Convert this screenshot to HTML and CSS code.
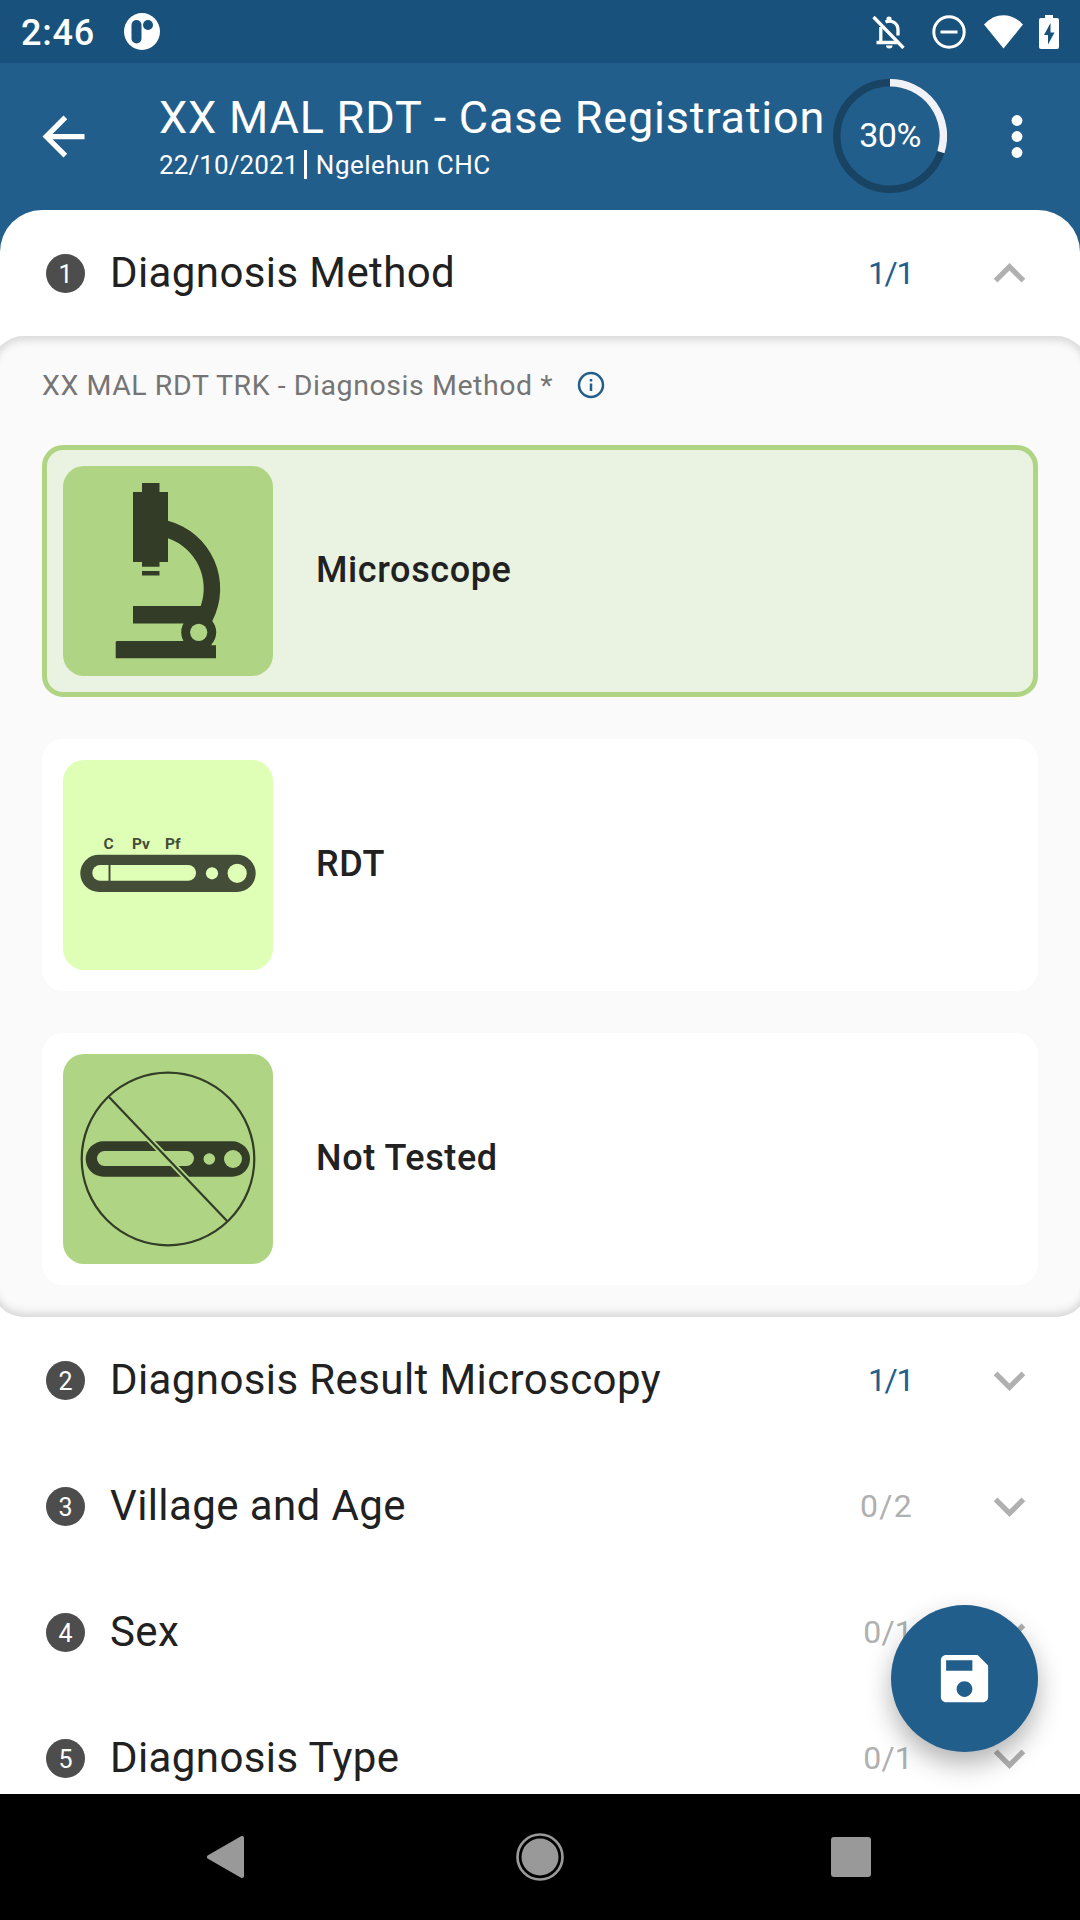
FILE: index.html
```html
<!DOCTYPE html>
<html lang="en">
<head>
<meta charset="utf-8">
<title>XX MAL RDT - Case Registration</title>
<link rel="stylesheet" href="styles.css">
</head>
<body>
<div class="screen">
  <div class="status">
    <span class="time">2:46</span>
    <svg class="app-mark" viewBox="0 0 36 37"><ellipse cx="18" cy="18.500" rx="18" ry="18.500" fill="#fff"/><rect x="7.500" y="7" width="10" height="23.500" rx="5" fill="#17517c"/><circle cx="24" cy="12" r="5" fill="#17517c"/></svg>
    <div class="status-icons">
      <svg class="bell" viewBox="0 0 33 34" fill="none" stroke="#fff" stroke-width="3.300"><path d="M1.500 2l30 31"/><path d="M8.800 12v15M4.500 27.500H27M13.500 7c6-2.500 12.500 1 12.500 8v5.500"/><path d="M17 1v5" stroke-width="5" stroke-linecap="round" transform="translate(0 2.500) scale(1 .6)"/><path d="M14 30.500h6.500a3.250 3 0 0 1-6.500 0z" fill="#fff" stroke="none"/></svg>
      <svg class="dnd" viewBox="0 0 34 34" fill="none" stroke="#fff" stroke-width="3"><circle cx="17" cy="17" r="15.200"/><path d="M8.500 17h17"/></svg>
      <svg class="wifi" viewBox="0 0 39 34"><path d="M0 9.500C11-3 28-3 39 9.500L19.500 33.500z" fill="#fff"/></svg>
      <svg class="battery" viewBox="0 0 20 34"><path d="M6 0h8v3h4q2 0 2 2v27q0 2-2 2H2q-2 0-2-2V5q0-2 2-2h4z" fill="#fff"/><path d="M11.500 8L5 20h4v9.500L15.500 17.500h-4z" fill="#17517c"/></svg>
    </div>
  </div>
  <header class="appbar">
    <svg class="back" viewBox="0 0 24 24"><path fill="#fff" d="M20 11H7.830l5.590-5.590L12 4l-8 8 8 8 1.410-1.410L7.830 13H20v-2z"/></svg>
    <div class="titles"><h1>XX MAL RDT - Case Registration</h1><p><span class="date">22/10/2021</span><i class="bar"></i>Ngelehun CHC</p></div>
    <div class="progress">
      <svg viewBox="0 0 114 114" fill="none" stroke-width="7.500"><circle cx="57" cy="57" r="53.200" stroke="#194363"/><path d="M57 3.800A53.200 53.200 0 0 1 107.900 73.100" stroke="#f0f2f7"/></svg>
      <span>30%</span>
    </div>
    <svg class="kebab" viewBox="0 0 12 43" fill="#fff"><circle cx="6" cy="5.500" r="5.400"/><circle cx="6" cy="21.500" r="5.400"/><circle cx="6" cy="37.500" r="5.400"/></svg>
  </header>
  <main class="sheet">
    <section class="row"><span class="num">1</span><h2>Diagnosis Method</h2><span class="count done">1/1</span><svg class="chev" viewBox="0 0 24 24"><path d="M12 8l-6 6 1.410 1.410L12 10.830l4.590 4.580L18 14z"/></svg></section>
    <div class="panel">
      <div class="label"><span>XX MAL RDT TRK - Diagnosis Method *</span>
        <svg viewBox="0 0 28 28" fill="none" stroke="#225e8c" stroke-width="2.500"><circle cx="14" cy="14" r="12"/><path d="M14 12.500V20M14 8v2.600"/></svg></div>
      <div class="card selected">
        <svg class="thumb" viewBox="0 0 210 210"><rect width="210" height="210" fill="#afd584"/>
          <g fill="#333c27"><path d="M79 17h17.500v9H105v70h-8.500v4.700H79V96h-9V26h9zM79 105h17.500v4.500H79z"/><path d="M105 54.700A70.300 70.300 0 0 1 149.300 155v20l-1 4.300h4.700v13H52.700V176l1-1h67v-17.500H70V140h67.700A53 53 0 0 0 105 72.300z"/><circle cx="135.700" cy="166.300" r="17.500"/></g><circle cx="135.700" cy="166.300" r="8.600" fill="#afd584"/></svg>
        <strong>Microscope</strong>
      </div>
      <div class="card">
        <svg class="thumb" viewBox="0 0 210 210"><rect width="210" height="210" fill="#e0ffb6"/>
          <rect x="17.300" y="94.700" width="175.400" height="37.300" rx="18.650" fill="#444d37"/><rect x="29.300" y="105" width="103.700" height="15.800" rx="7.900" fill="#e0ffb6"/><path d="M46.500 104v18" stroke="#444d37" stroke-width="2"/><circle cx="149" cy="113.300" r="6.100" fill="#e0ffb6"/><circle cx="174.200" cy="113.300" r="9.600" fill="#e0ffb6"/>
          <g class="marks"><text x="40.500" y="89.300">C</text><text x="69" y="89.300">Pv</text><text x="102" y="89.300">Pf</text></g></svg>
        <strong>RDT</strong>
      </div>
      <div class="card">
        <svg class="thumb" viewBox="0 0 210 210"><rect width="210" height="210" fill="#afd584"/>
          <rect x="22.700" y="87.300" width="164.300" height="35.400" rx="17.700" fill="#333c27"/><rect x="34" y="97" width="97" height="15" rx="7.500" fill="#afd584"/><circle cx="146.300" cy="105" r="5.800" fill="#afd584"/><circle cx="170" cy="105" r="9" fill="#afd584"/>
          <path d="M85 84l40 42" stroke="#afd584" stroke-width="6"/>
          <g fill="none" stroke="#333c27" stroke-width="2.200"><circle cx="105" cy="105" r="86.300"/><path d="M45.300 42.300l119 125"/></g></svg>
        <strong>Not Tested</strong>
      </div>
    </div>
    <section class="row"><span class="num">2</span><h2>Diagnosis Result Microscopy</h2><span class="count done">1/1</span><svg class="chev" viewBox="0 0 24 24"><path d="M16.590 8.590L12 13.170 7.410 8.590 6 10l6 6 6-6z"/></svg></section>
    <section class="row"><span class="num">3</span><h2>Village and Age</h2><span class="count wide">0/2</span><svg class="chev" viewBox="0 0 24 24"><path d="M16.590 8.590L12 13.170 7.410 8.590 6 10l6 6 6-6z"/></svg></section>
    <section class="row"><span class="num">4</span><h2>Sex</h2><span class="count">0/1</span><svg class="chev" viewBox="0 0 24 24"><path d="M16.590 8.590L12 13.170 7.410 8.590 6 10l6 6 6-6z"/></svg></section>
    <section class="row"><span class="num">5</span><h2>Diagnosis Type</h2><span class="count">0/1</span><svg class="chev" viewBox="0 0 24 24"><path d="M16.590 8.590L12 13.170 7.410 8.590 6 10l6 6 6-6z"/></svg></section>
    <button class="fab" aria-label="Save"><svg viewBox="0 0 24 24"><path fill="#fff" fill-rule="evenodd" d="M17 3H5c-1.110 0-2 .9-2 2v14c0 1.100.89 2 2 2h14c1.100 0 2-.9 2-2V7l-4-4zm-5 16c-1.660 0-3-1.340-3-3s1.340-3 3-3 3 1.340 3 3-1.340 3-3 3zm3-10H5V5h10v4z"/></svg></button>
  </main>
  <nav class="navbar">
    <svg class="nav-back" viewBox="0 0 37 42"><path d="M35 2v38L2 21z" fill="#999" stroke="#999" stroke-width="4" stroke-linejoin="round"/></svg>
    <svg class="nav-home" viewBox="0 0 48 48"><circle cx="24" cy="24" r="22.500" fill="none" stroke="#999" stroke-width="2.700"/><circle cx="24" cy="24" r="18.500" fill="#999"/></svg>
    <svg class="nav-recent" viewBox="0 0 40 40"><rect width="40" height="40" rx="3" fill="#999"/></svg>
  </nav>
</div>
</body>
</html>
```
FILE: styles.css
```css
* { box-sizing: border-box; }
body { margin: 0; font-family: Roboto, "Liberation Sans", sans-serif; }
svg { display: block; flex: none; }
h1, h2, p { margin: 0; font-weight: 400; white-space: nowrap; }

.screen { width: 1080px; height: 1920px; display: flex; flex-direction: column; overflow: hidden; background: #225e8c; }

.status { height: 63px; flex: none; display: flex; align-items: center; background: #17517c; color: #fff; padding: 0 21px; }
.time { font-size: 36px; font-weight: 500; line-height: 40px; letter-spacing: 0.800px; width: 103px; padding-top: 3px; }
.app-mark { width: 36px; height: 37px; }
.status-icons { margin-left: auto; display: flex; align-items: center; }
.bell { width: 33px; height: 34px; margin-right: 27px; }
.dnd { width: 34px; height: 34px; margin-right: 18px; }
.wifi { width: 39px; height: 34px; margin-right: 16px; }
.battery { width: 20px; height: 34px; }

.appbar { height: 147px; flex: none; display: flex; color: #fff; padding-left: 32px; }
.back { width: 63px; height: 63px; margin-top: 42px; }
.titles { width: 738px; padding: 28px 0 0 64px; }
h1 { font-size: 45px; line-height: 53px; letter-spacing: 0.800px; }
.titles p { font-size: 26px; line-height: 34px; margin-top: 4px; letter-spacing: 0.500px; }
.date { letter-spacing: 0.100px; }
.bar { display: inline-block; width: 2.500px; height: 29px; background: #fff; vertical-align: -5px; margin: 0 9px 0 6px; }
.progress { width: 114px; height: 114px; margin-top: 16px; display: grid; place-items: center; }
.progress > * { grid-area: 1 / 1; }
.progress svg { width: 114px; height: 114px; }
.progress span { font-size: 34px; line-height: 40px; letter-spacing: -0.500px; padding-bottom: 2px; }
.kebab { width: 12px; height: 43px; margin: 52px 0 0 64px; }

.sheet { position: relative; flex: 1; min-height: 0; background: #fff; border-radius: 42px 42px 0 0; overflow: hidden; }
.row { height: 126px; display: flex; align-items: center; padding: 0 39px 0 46px; }
.num { width: 39px; height: 39px; border-radius: 50%; background: #4d4d4d; color: #fff; font-size: 25px; line-height: 42px; text-align: center; }
h2 { margin-left: 25px; font-size: 42px; line-height: 52px; letter-spacing: 0.400px; color: #212121; flex: 1; }
.count { font-size: 32px; line-height: 40px; letter-spacing: 0.200px; color: #b0b0b0; margin-right: 65px; }
.wide { letter-spacing: 1.300px; }
.done { color: #225e8c; letter-spacing: -1.400px; }
.chev { width: 63px; height: 63px; fill: #b0b0b0; }

.panel { height: 981px; margin: 0 -8px; background: #fafafa; border-radius: 32px; padding: 0 50px; box-shadow: inset 0 4px 8px #d8d8d8, inset 0 -4px 8px #d8d8d8; }
.label { height: 109px; display: flex; align-items: center; gap: 24px; padding-bottom: 11px; font-size: 28.500px; letter-spacing: 0.560px; color: #757575; white-space: nowrap; }
.label svg { width: 28px; height: 28px; }
.card { height: 252px; margin-bottom: 42px; display: flex; align-items: center; padding-left: 21px; background: #fff; border-radius: 21px; }
.selected { background: #eaf3e2; border: 5px solid #afd584; padding-left: 16px; }
.thumb { width: 210px; height: 210px; border-radius: 21px; }
.card strong { margin-left: 43px; padding-bottom: 2px; font-size: 36px; font-weight: 500; letter-spacing: 0.600px; color: #212121; }
.marks { font: 700 15.500px Roboto, "Liberation Sans", sans-serif; fill: #444d37; }

.fab { position: absolute; right: 42px; bottom: 42px; width: 147px; height: 147px; padding: 42px; border: 0; border-radius: 50%; background: #225e8c; box-shadow: 0 12px 26px rgba(0, 0, 0, .3); }
.fab svg { width: 63px; height: 63px; }

.navbar { height: 126px; flex: none; background: #000; display: flex; align-items: center; padding-left: 207px; }
.nav-back { width: 37px; height: 42px; }
.nav-home { width: 48px; height: 48px; margin-left: 272px; }
.nav-recent { width: 40px; height: 40px; margin-left: 267px; }
```
